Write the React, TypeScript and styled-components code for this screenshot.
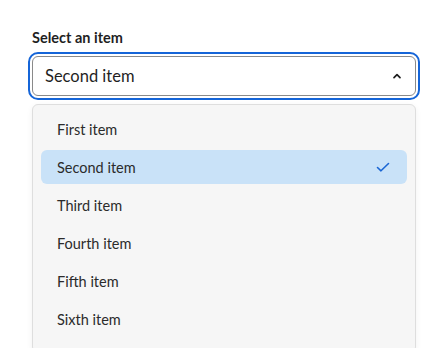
import React, {useState} from 'react';
import styled, {createGlobalStyle} from 'styled-components';

const GlobalStyle = createGlobalStyle`
  body {
    margin: 0;
    padding: 0;
    background: #ffffff;
    font-family: Lato, "Noto Sans", sans-serif;
    color: #222;
  }
`;

const Page = styled.div`
  padding: 28px 32px 0;
  width: 384px;
  height: 320px;
  box-sizing: content-box;
  overflow: hidden;
`;

const Label = styled.label`
  display: block;
  font-size: 14.5px;
  line-height: 20px;
  font-weight: 700;
  color: #1f1f1f;
  margin-bottom: 8px;
`;

const Trigger = styled.button`
  display: flex;
  align-items: center;
  justify-content: space-between;
  box-sizing: border-box;
  width: 100%;
  height: 40px;
  padding: 0 13px 0 12px;
  background: #fff;
  border: 1px solid #8a8a8a;
  border-radius: 6px;
  outline: 2px solid #1565d8;
  outline-offset: 2px;
  font: inherit;
  font-size: 16.5px;
  color: #1f1f1f;
  cursor: pointer;
`;

const Menu = styled.ul`
  box-sizing: border-box;
  margin: 8px 0 0;
  padding: 7px 8px 16px;
  list-style: none;
  background: #f6f6f6;
  border: 1px solid #dedede;
  border-radius: 6px;
  box-shadow: 0 2px 6px rgba(0, 0, 0, 0.06);
  display: flex;
  flex-direction: column;
  gap: 4px;
`;

const Option = styled.li<{ $selected: boolean }>`
  display: flex;
  align-items: center;
  justify-content: space-between;
  height: 34px;
  padding: 0 16px;
  border-radius: 6px;
  font-size: 14.5px;
  color: #2b2b2b;
  background: ${({$selected}) => ($selected ? '#c9e2f8' : 'transparent')};
`;

const Chevron = () => (
  <svg width="10" height="10" viewBox="0 0 10 10" fill="none">
    <path d="M2 6.6 L5 3.6 L8 6.6" stroke="#1f1f1f" strokeWidth="1.7" strokeLinecap="round" strokeLinejoin="round"/>
  </svg>
);

const Check = () => (
  <svg width="16" height="16" viewBox="0 0 16 16" fill="none">
    <path d="M2.5 8.5 L6 11.8 L13.5 4.5" stroke="#1a66d4" strokeWidth="1.6" strokeLinecap="round" strokeLinejoin="round"/>
  </svg>
);

const items = ['First item', 'Second item', 'Third item', 'Fourth item', 'Fifth item', 'Sixth item'];

export default function App() {
  const [selected, setSelected] = useState('Second item');

  return (
    <Page>
      <GlobalStyle/>
      <Label>Select an item</Label>
      <Trigger>
        {selected}
        <Chevron/>
      </Trigger>
      <Menu>
        {items.map((item) => (
          <Option key={item} $selected={item === selected} onClick={() => setSelected(item)}>
            {item}
            {item === selected && <Check/>}
          </Option>
        ))}
      </Menu>
    </Page>
  );
}
